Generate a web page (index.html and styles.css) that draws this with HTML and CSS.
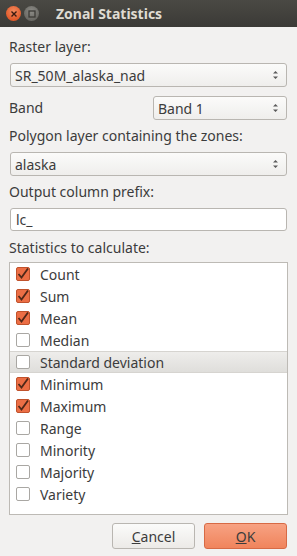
FILE: index.html
```html
<!DOCTYPE html>
<html lang="en">
<head>
    <meta charset="UTF-8">
    <meta name="viewport" content="width=device-width, initial-scale=1.0">
    <title>Zonal Statistics</title>
    <link rel="stylesheet" href="styles.css">
</head>
<body>
    <!-- Title bar -->
    <header class="titlebar">
        <span class="wbtn close">
            <svg width="8" height="8" viewBox="0 0 8 8"><path d="M1.5 1.5 L6.5 6.5 M6.5 1.5 L1.5 6.5" stroke="#3a1a10" stroke-width="1.4"/></svg>
        </span>
        <span class="wbtn min">
            <svg width="8" height="8" viewBox="0 0 8 8"><rect x="1" y="1" width="6" height="6" fill="none" stroke="#3c3b37" stroke-width="1.3"/></svg>
        </span>
        <h1>Zonal Statistics</h1>
    </header>

    <main class="dialog">
        <label class="lbl">Raster layer:</label>
        <div class="combo">
            <span>SR_50M_alaska_nad</span>
            <svg class="arrows" width="7" height="12" viewBox="0 0 7 12"><path d="M1 4.5 L3.5 2 L6 4.5 Z M1 7.5 L3.5 10 L6 7.5 Z" fill="#5a5a5a"/></svg>
        </div>

        <div class="band-row">
            <label class="lbl">Band</label>
            <div class="combo band">
                <span>Band 1</span>
                <svg class="arrows" width="7" height="12" viewBox="0 0 7 12"><path d="M1 4.5 L3.5 2 L6 4.5 Z M1 7.5 L3.5 10 L6 7.5 Z" fill="#5a5a5a"/></svg>
            </div>
        </div>

        <label class="lbl">Polygon layer containing the zones:</label>
        <div class="combo">
            <span>alaska</span>
            <svg class="arrows" width="7" height="12" viewBox="0 0 7 12"><path d="M1 4.5 L3.5 2 L6 4.5 Z M1 7.5 L3.5 10 L6 7.5 Z" fill="#5a5a5a"/></svg>
        </div>

        <label class="lbl">Output column prefix:</label>
        <div class="field">lc_</div>

        <label class="lbl last">Statistics to calculate:</label>
        <ul class="stats">
            <li><span class="cb on"></span>Count</li>
            <li><span class="cb on"></span>Sum</li>
            <li><span class="cb on"></span>Mean</li>
            <li><span class="cb"></span>Median</li>
            <li class="hover"><span class="cb"></span>Standard deviation</li>
            <li><span class="cb on"></span>Minimum</li>
            <li><span class="cb on"></span>Maximum</li>
            <li><span class="cb"></span>Range</li>
            <li><span class="cb"></span>Minority</li>
            <li><span class="cb"></span>Majority</li>
            <li><span class="cb"></span>Variety</li>
        </ul>

        <div class="buttons">
            <button class="btn"><u>C</u>ancel</button>
            <button class="btn ok"><u>O</u>K</button>
        </div>
    </main>
</body>
</html>
```

FILE: styles.css
```css
/* Global */
body {
    margin: 0;
    background: #f2f1f0;
    font-family: 'Noto Sans', 'Open Sans', sans-serif;
    font-size: 14px;
    color: #3c3c3c;
}

/* Title bar */
.titlebar {
    height: 27px;
    background: linear-gradient(#4a4944, #3b3a36);
    display: flex;
    align-items: center;
    padding-left: 6px;
    box-sizing: border-box;
}

.wbtn {
    width: 15px;
    height: 15px;
    border-radius: 50%;
    display: flex;
    align-items: center;
    justify-content: center;
    margin-right: 3px;
}

.wbtn.close {
    background: radial-gradient(circle at 50% 35%, #f28a5e, #e25a2a 70%);
}

.wbtn.min {
    background: radial-gradient(circle at 50% 35%, #8c8b86, #6a6964 70%);
}

.titlebar h1 {
    margin: 0 0 0 14px;
    font-size: 14px;
    font-weight: bold;
    color: #dfdbd2;
}

/* Dialog body */
.dialog {
    padding: 12px 10px 0 9px;
    display: flex;
    flex-direction: column;
}

.lbl {
    display: block;
    height: 16px;
    line-height: 16px;
    margin-bottom: 8px;
}

.lbl.last {
    margin-bottom: 6px;
}

.combo {
    height: 24px;
    border: 1px solid #b9b6b1;
    border-radius: 3px;
    background: linear-gradient(#fbfbfa, #efeeec);
    margin: 0 0 8px 1px;
    display: flex;
    align-items: center;
    justify-content: space-between;
    padding: 0 7px 0 4px;
    box-sizing: border-box;
}

.band-row {
    display: flex;
    align-items: center;
    justify-content: space-between;
    margin: 1px 0 8px 0;
}

.band-row .lbl {
    margin: 0;
}

.combo.band {
    width: 134px;
    margin: 0;
}

.field {
    height: 23px;
    border: 1px solid #b9b6b1;
    border-radius: 3px;
    background: #fff;
    margin: 0 0 9px 1px;
    padding: 0 5px;
    line-height: 21px;
    box-sizing: border-box;
}

/* Statistics list */
.stats {
    list-style: none;
    margin: 0 -1px 0 0;
    padding: 0;
    border: 1px solid #bdbab5;
    background: #fff;
    height: 253px;
    box-sizing: border-box;
}

.stats li {
    height: 22px;
    display: flex;
    align-items: center;
    padding-left: 6px;
}

.stats li.hover {
    background: linear-gradient(#eeedeb, #dfdedb);
    border-top: 1px solid #d6d4d0;
    border-bottom: 1px solid #d6d4d0;
    height: 20px;
}

.cb {
    width: 14px;
    height: 14px;
    border: 1px solid #a9a7a3;
    border-radius: 2px;
    background: #fff;
    margin-right: 10px;
    box-sizing: border-box;
}

.cb.on {
    border-color: #c0522c;
    background: #ec6e45 url("data:image/svg+xml,%3Csvg xmlns='http://www.w3.org/2000/svg' width='14' height='14'%3E%3Cpath d='M2.5 7 L5.5 10.5 L12 1.5' fill='none' stroke='%23502818' stroke-width='1.8'/%3E%3C/svg%3E") no-repeat center;
}

/* Buttons */
.buttons {
    display: flex;
    justify-content: flex-end;
    gap: 9px;
    margin-top: 8px;
}

.btn {
    width: 83px;
    height: 26px;
    border: 1px solid #b9b6b1;
    border-radius: 3px;
    background: linear-gradient(#fbfbfa, #eceae7);
    font-family: inherit;
    font-size: 14px;
    color: #3c3c3c;
    padding: 0;
}

.btn.ok {
    border-color: #d76a45;
    background: linear-gradient(#f7a283, #f0845c);
}
```
